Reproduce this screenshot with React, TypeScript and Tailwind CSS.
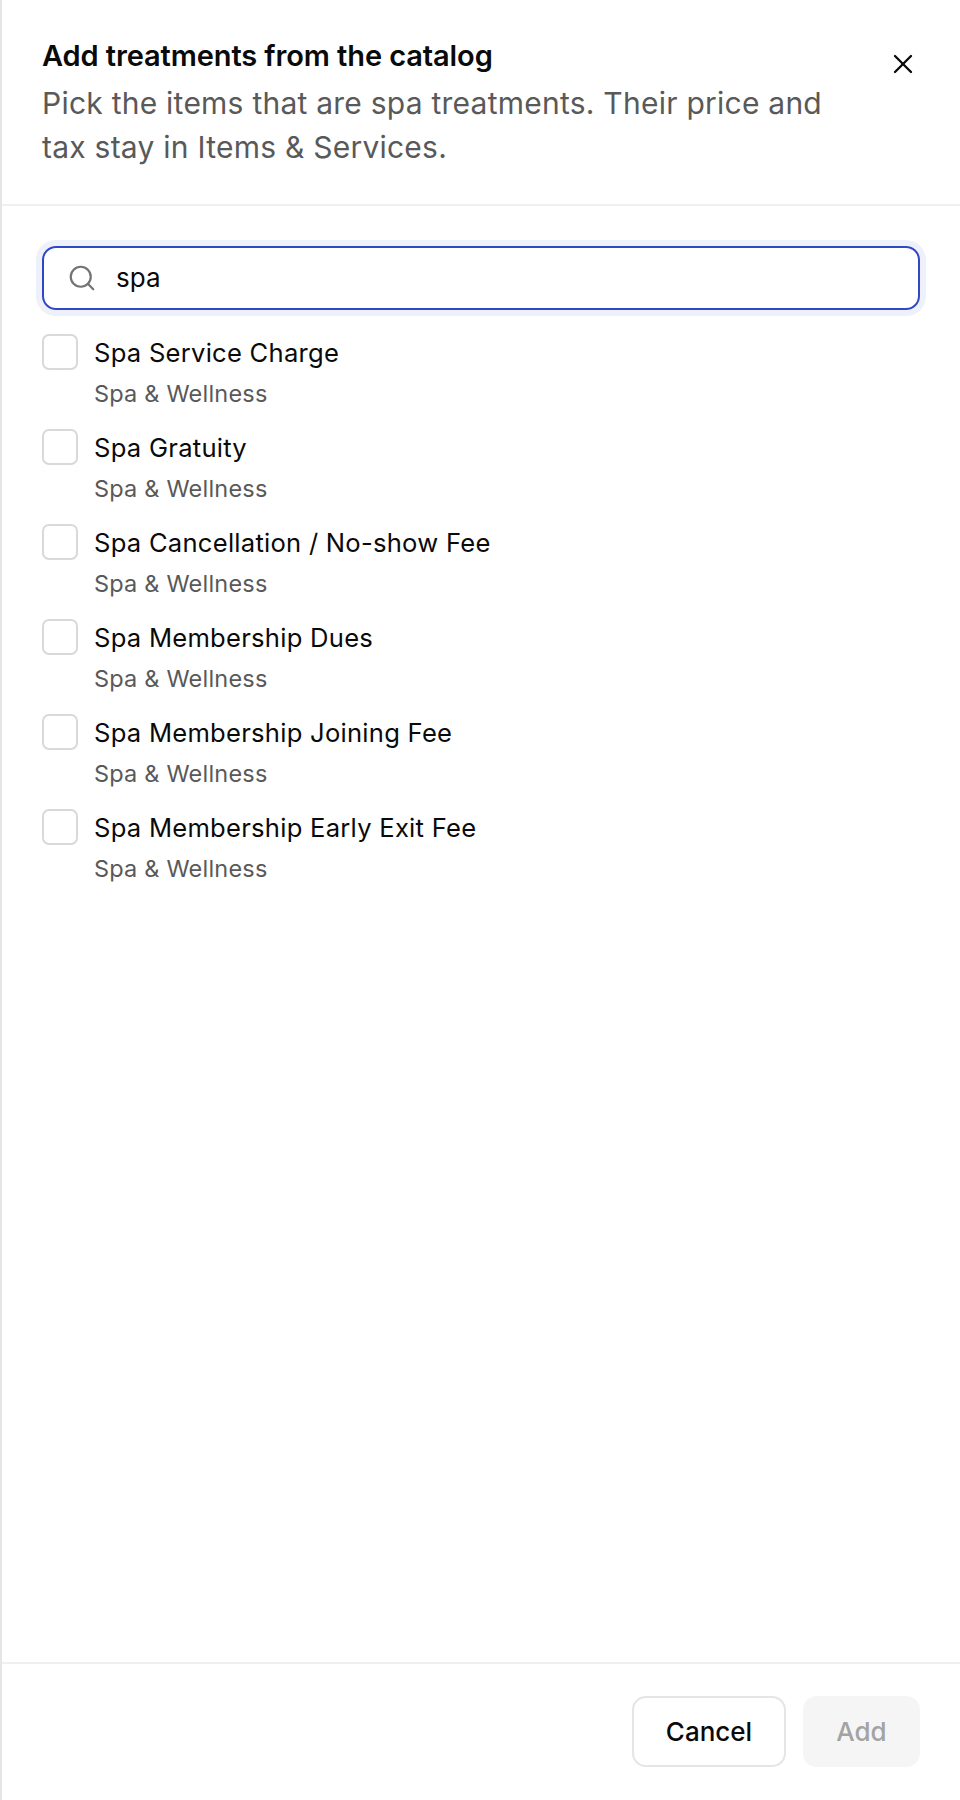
import { Search, X } from "lucide-react"

const items = [
  "Spa Service Charge",
  "Spa Gratuity",
  "Spa Cancellation / No-show Fee",
  "Spa Membership Dues",
  "Spa Membership Joining Fee",
  "Spa Membership Early Exit Fee",
]

function Row({ label }: { label: string }) {
  return (
    <label className="flex gap-[16px]">
      <span className="h-[36px] w-[36px] shrink-0 rounded-[7px] border-2 border-[#d9d9d9] bg-white" />
      <span className="flex flex-col">
        <span className="text-[25.6px] leading-[38px] tracking-[0.25px] text-[#0a0a0a]">{label}</span>
        <span className="mt-[5px] text-[23.5px] leading-[34px] tracking-[0.2px] text-[#595959]">Spa &amp; Wellness</span>
      </span>
    </label>
  )
}

export default function App() {
  return (
    <div className="flex h-[1800px] w-[960px] flex-col border-l-2 border-[#e5e5e5] bg-white font-['Inter',sans-serif]">
      <header className="flex h-[206px] shrink-0 items-start justify-between border-b-2 border-[#f0f0f0] pl-[40px] pr-[41px] pt-[36px]">
        <div className="w-[800px]">
          <h2 className="text-[29px] font-semibold leading-[40px] tracking-[-0.1px] text-[#0a0a0a]">
            Add treatments from the catalog
          </h2>
          <p className="mt-[5px] text-[30px] leading-[44px] tracking-[0.24px] text-[#595959]">
            Pick the items that are spa treatments. Their price and tax stay in Items &amp; Services.
          </p>
        </div>
        <button className="mt-[12px] text-[#0a0a0a]">
          <X size={32} strokeWidth={1.75} />
        </button>
      </header>

      <main className="flex-1 px-[40px] pt-[40px]">
        <div className="flex h-[64px] items-center gap-[19px] rounded-[14px] border-2 border-[#3147c4] pl-[23px] pr-[24px] shadow-[0_0_0_6px_#eef0fb]">
          <Search size={30} strokeWidth={1.75} className="text-[#737373]" />
          <span className="text-[26px] leading-none text-[#0a0a0a]">spa</span>
        </div>
        <div className="mt-[23.7px] flex flex-col gap-[18px]">
          {items.map((item) => (
            <Row key={item} label={item} />
          ))}
        </div>
      </main>

      <footer className="flex h-[138px] shrink-0 items-start justify-end gap-[17px] border-t-2 border-[#f0f0f0] pr-[40px] pt-[32px]">
        <button className="h-[71px] w-[154px] rounded-[14px] border-2 border-[#e5e5e5] bg-white text-[26px] font-medium text-[#0a0a0a]">
          Cancel
        </button>
        <button className="h-[71px] w-[117px] rounded-[14px] bg-[#f5f5f5] text-[26px] font-medium text-[#a3a3a3]">
          Add
        </button>
      </footer>
    </div>
  )
}
